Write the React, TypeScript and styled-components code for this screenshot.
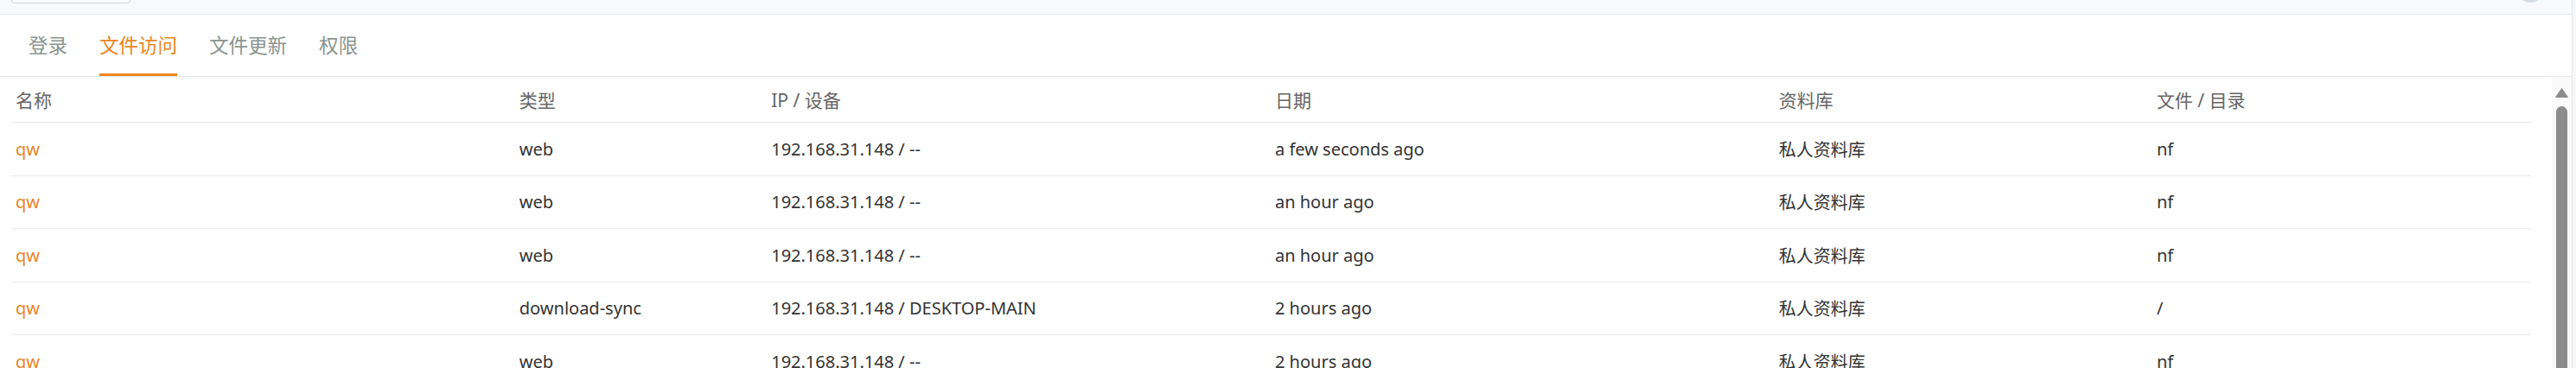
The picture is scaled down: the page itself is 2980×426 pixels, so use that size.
import React from "react";
import styled, { createGlobalStyle } from "styled-components";

const GlobalStyle = createGlobalStyle`
  html, body { margin: 0; padding: 0; background: #f7f7f7; }
  body { font-family: "Noto Sans", "Noto Sans CJK SC", sans-serif; overflow: hidden; }
`;

const Frame = styled.div`
  display: flex;
  width: 2980px;
  height: 426px;
  overflow: hidden;
`;

const Page = styled.div`
  width: 2975px;
  display: flex;
  flex-direction: column;
  background: #fff;
  border-right: 1px solid #e4e4e4;
`;

const TopBar = styled.div`
  height: 17px;
  box-sizing: border-box;
  flex: none;
  display: flex;
  align-items: flex-end;
  justify-content: space-between;
  padding: 0 33px 13px 13px;
  background: #f8f9fb;
  border-bottom: 1px solid #e6e8ec;
  overflow: hidden;
`;

const SearchBox = styled.div`
  width: 138px;
  height: 32px;
  flex: none;
  border: 1px solid #cfd3d8;
  border-radius: 4px;
  background: #fff;
  box-sizing: border-box;
  margin-bottom: -1px;
`;

const Avatar = styled.div`
  width: 30px;
  height: 30px;
  flex: none;
  border-radius: 50%;
  background: #d3d9e1;
`;

const TabBar = styled.div`
  height: 71px;
  flex: none;
  display: flex;
  gap: 37px;
  padding-left: 33px;
  border-bottom: 1px solid #e8e8e8;
`;

const Tab = styled.div<{ $active?: boolean }>`
  display: flex;
  align-items: center;
  font-size: 22.5px;
  color: ${(p) => (p.$active ? "#ec8523" : "#8a948f")};
  border-bottom: 3px solid ${(p) => (p.$active ? "#ec8523" : "transparent")};
  padding-top: 1px;
`;

const Body = styled.div`
  flex: 1;
  display: flex;
  min-height: 0;
`;

const TableArea = styled.div`
  flex: 1;
  padding: 0 24px 0 14px;
`;

const Table = styled.table`
  width: 100%;
  table-layout: fixed;
  border-collapse: collapse;
`;

const Th = styled.th`
  height: 52px;
  padding: 0 4px;
  text-align: left;
  font-weight: 400;
  font-size: 21px;
  color: #666;
  border-bottom: 1px solid #e8e8e8;
  vertical-align: middle;
`;

const Td = styled.td<{ $link?: boolean }>`
  height: 60.5px;
  padding: 0 4px;
  font-size: 20px;
  color: ${(p) => (p.$link ? "#ec8523" : "#333")};
  border-bottom: 1px solid #e8e8e8;
  vertical-align: middle;
  white-space: nowrap;
`;

const ScrollTrack = styled.div`
  width: 23px;
  flex: none;
  background: #fafafa;
  display: flex;
  flex-direction: column;
  align-items: center;
  padding-top: 13px;
  gap: 10px;
`;

const ScrollThumb = styled.div`
  width: 13px;
  flex: 1;
  background: #8c8c8c;
  border-radius: 7px 7px 0 0;
`;

const rows = [
  { name: "qw", type: "web", ip: "192.168.31.148 / --", date: "a few seconds ago", repo: "私人资料库", path: "nf" },
  { name: "qw", type: "web", ip: "192.168.31.148 / --", date: "an hour ago", repo: "私人资料库", path: "nf" },
  { name: "qw", type: "web", ip: "192.168.31.148 / --", date: "an hour ago", repo: "私人资料库", path: "nf" },
  { name: "qw", type: "download-sync", ip: "192.168.31.148 / DESKTOP-MAIN", date: "2 hours ago", repo: "私人资料库", path: "/" },
  { name: "qw", type: "web", ip: "192.168.31.148 / --", date: "2 hours ago", repo: "私人资料库", path: "nf" },
];

export default function App() {
  return (
    <>
      <GlobalStyle />
      <Frame>
        <Page>
          <TopBar>
            <SearchBox />
            <Avatar />
          </TopBar>
          <TabBar>
            <Tab>登录</Tab>
            <Tab $active>文件访问</Tab>
            <Tab>文件更新</Tab>
            <Tab>权限</Tab>
          </TabBar>
          <Body>
            <TableArea>
              <Table>
                <colgroup>
                  <col style={{ width: "20%" }} />
                  <col style={{ width: "10%" }} />
                  <col style={{ width: "20%" }} />
                  <col style={{ width: "20%" }} />
                  <col style={{ width: "15%" }} />
                  <col style={{ width: "15%" }} />
                </colgroup>
                <thead>
                  <tr>
                    <Th>名称</Th>
                    <Th>类型</Th>
                    <Th>IP / 设备</Th>
                    <Th>日期</Th>
                    <Th>资料库</Th>
                    <Th>文件 / 目录</Th>
                  </tr>
                </thead>
                <tbody>
                  {rows.map((r, i) => (
                    <tr key={i}>
                      <Td $link>{r.name}</Td>
                      <Td>{r.type}</Td>
                      <Td>{r.ip}</Td>
                      <Td>{r.date}</Td>
                      <Td>{r.repo}</Td>
                      <Td>{r.path}</Td>
                    </tr>
                  ))}
                </tbody>
              </Table>
            </TableArea>
            <ScrollTrack>
              <svg width="15" height="11" viewBox="0 0 15 11">
                <path d="M7.5 0.5 L14.5 10.5 L0.5 10.5 Z" fill="#8c8c8c" strokeLinejoin="round" stroke="#8c8c8c" strokeWidth="1" />
              </svg>
              <ScrollThumb />
            </ScrollTrack>
          </Body>
        </Page>
      </Frame>
    </>
  );
}
